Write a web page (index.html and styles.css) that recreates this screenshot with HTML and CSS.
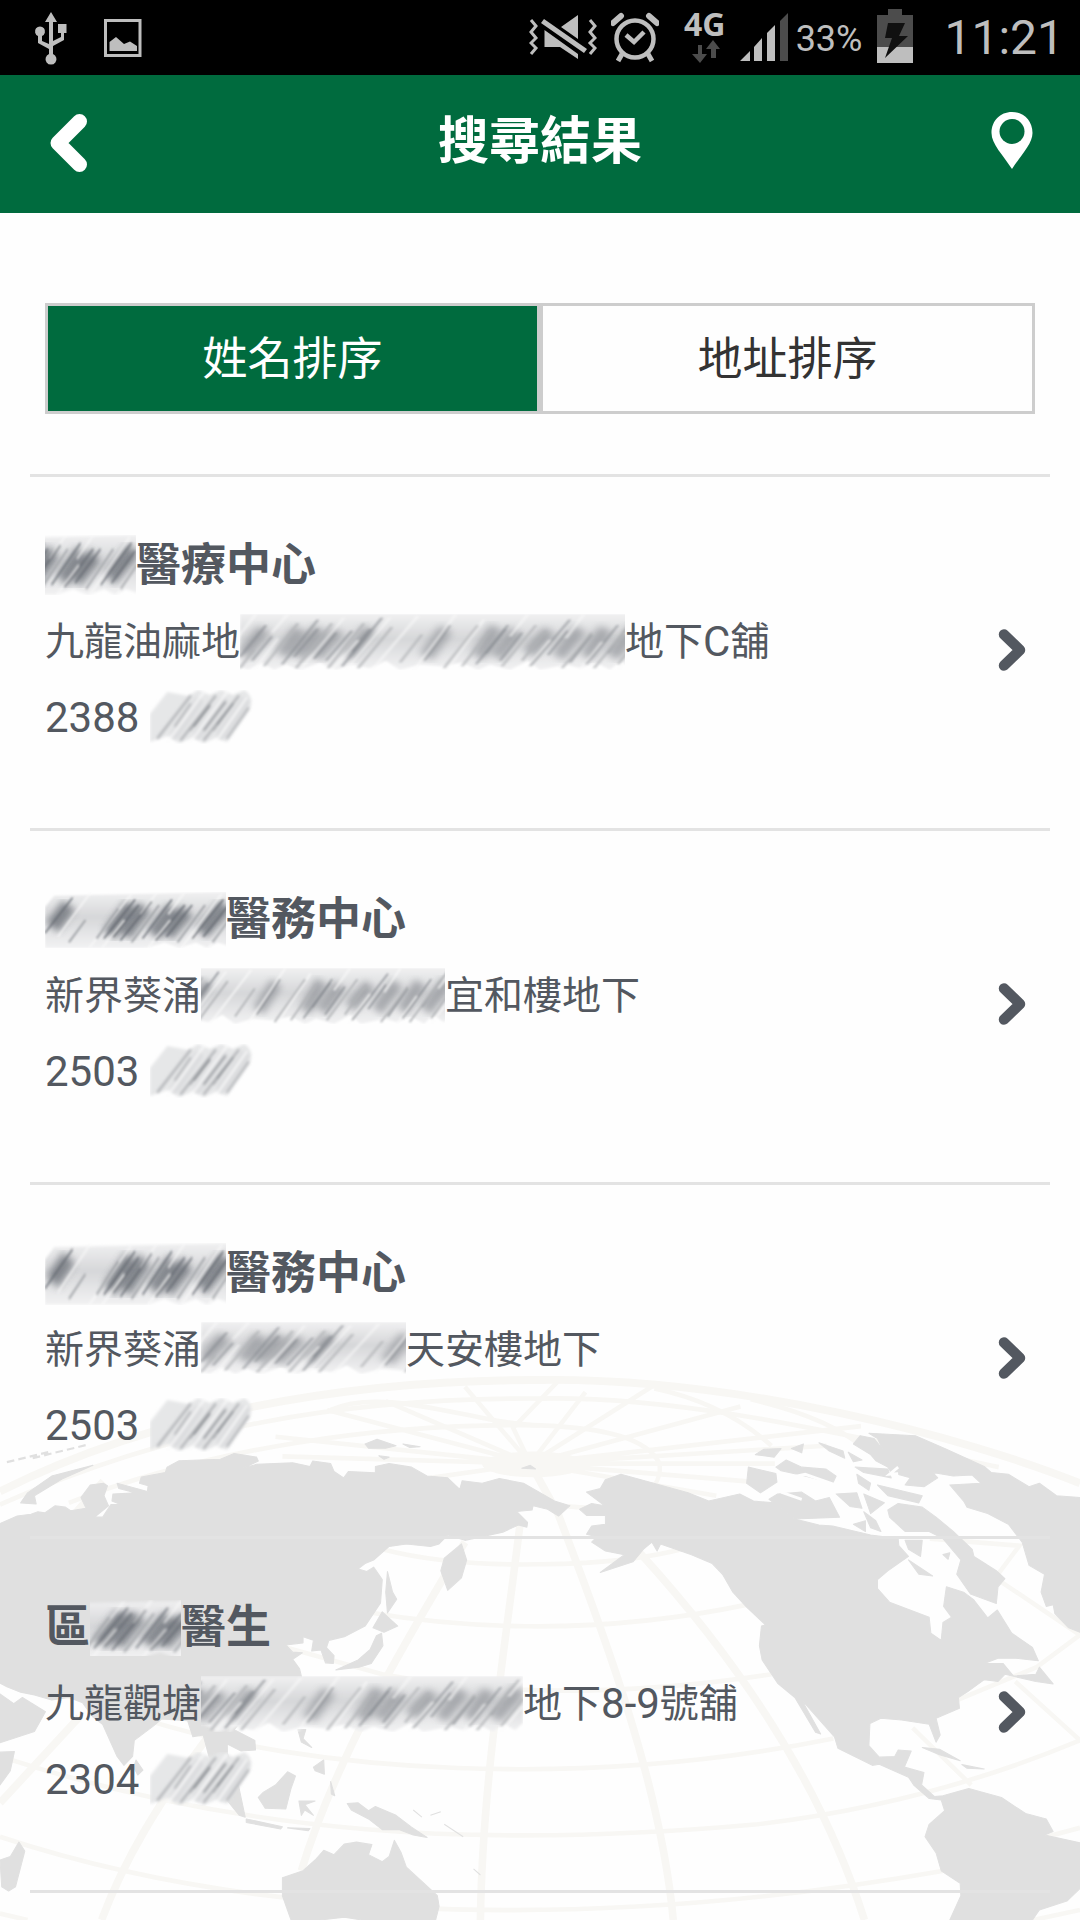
FILE: index.html
```html
<!DOCTYPE html>
<html lang="zh-Hant">
<head>
<meta charset="utf-8">
<meta name="viewport" content="width=device-width, initial-scale=1">
<title>搜尋結果</title>
<link rel="stylesheet" href="styles.css">
</head>
<body>
<svg class="defs" aria-hidden="true">
  <defs>
    <filter id="soft" x="-10%" y="-10%" width="120%" height="120%"><feGaussianBlur stdDeviation="1.4"/></filter>
    <filter id="softer" x="-10%" y="-20%" width="120%" height="140%"><feGaussianBlur stdDeviation="4"/></filter>
    <linearGradient id="fade" x1="0" y1="0" x2="0" y2="1">
      <stop offset="0" stop-color="#f0f0f1"/><stop offset=".45" stop-color="#d6d7d9"/><stop offset="1" stop-color="#f2f2f3"/>
    </linearGradient>
    <!-- brush strokes that hide private details -->
    <symbol id="brush" viewBox="0 0 400 60" preserveAspectRatio="none">
      <path fill="url(#fade)" filter="url(#soft)" d="M0 0H400V50L392 58L380 50L370 60L356 52L340 58L326 54L300 60L288 50L270 60L250 54L238 60L222 52L200 56L180 54L160 60L146 50L130 58L112 54L96 60L80 52L60 60L46 54L34 60L22 52L8 60L0 56Z"/>
      <g filter="url(#softer)" stroke="#7b7f85" stroke-width="14" opacity=".55">
        <path d="M4 44L24 16M42 44L60 16M58 46L80 16M76 46L98 18M108 46L130 16M186 46L206 16M238 46L256 14M256 46L276 18M288 42L310 18M318 46L340 16M346 46L366 16M372 46L396 14"/>
      </g>
      <g filter="url(#soft)" fill="none">
        <path stroke="#fbfbfb" stroke-width="2" opacity=".8" d="M-6 30L16 0M14 60L38 26M32 20L48 0M60 60L104 4M92 60L118 28M106 60L150 4M132 60L178 2M174 60L216 0M206 60L244 6M270 24L288 0M286 60L310 28M326 26L344 0M340 60L362 30M386 22L400 4M378 60L400 32"/>
        <path stroke="#85898f" stroke-width="1.500" d="M0 46L26 12M12 50L32 24M42 54L78 6M54 46L78 16M74 48L96 20M86 50L112 18M102 56L142 4M112 40L130 16M184 50L210 12M236 54L268 12M246 42L266 16M260 50L282 20M290 56L330 6M308 44L328 18M330 52L352 22M346 54L378 12M368 42L388 14"/>
        <path stroke="#b1b3b6" stroke-width="2" d="M0 58L14 38M24 56L58 10M56 58L92 10M88 58L124 10M118 58L152 14M160 52L182 22M204 58L238 12M222 56L250 18M262 56L296 12M282 50L306 18M322 58L352 20M354 58L396 4M378 54L400 24"/>
      </g>
    </symbol>
    <symbol id="brush-dark" viewBox="0 0 200 60" preserveAspectRatio="none">
      <path fill="url(#fade)" filter="url(#soft)" d="M10 4L200 0V58L188 54L176 60L164 54L146 60L130 54L110 60H0V16Z"/>
      <g filter="url(#softer)" stroke="#4d525c" stroke-width="17" opacity=".6">
        <path d="M8 38L26 14M70 46L94 14M86 46L108 16M118 46L140 18M132 46L154 20M170 44L196 14"/>
      </g>
      <g filter="url(#soft)" fill="none">
        <path stroke="#fafafa" stroke-width="2" opacity=".8" d="M14 48L50 0M48 60L94 2M62 60L86 30M104 24L122 0M112 60L136 30M134 24L152 0M148 60L192 2M178 60L200 30"/>
        <path stroke="#62676f" stroke-width="1.500" d="M0 44L30 6M64 50L98 8M74 48L102 14M82 52L116 10M106 50L138 8M120 52L152 14M132 48L160 14M160 50L194 8M172 48L198 16"/>
        <path stroke="#9fa2a6" stroke-width="2" d="M26 54L44 30M56 50L80 18M94 54L124 14M144 54L174 14M182 54L200 30"/>
      </g>
    </symbol>
    <symbol id="brush-light" viewBox="0 0 110 54" preserveAspectRatio="none">
      <path filter="url(#soft)" fill="#e6e7e8" d="M0 24L18 2L40 6L50 0L62 5L74 0L86 5L98 0Q110 8 102 22L80 52L68 48L56 53L44 48L30 53L18 46L0 52Z"/>
      <g filter="url(#soft)" fill="none" stroke-linecap="round">
        <path stroke="#dcdddf" stroke-width="10" d="M26 44L50 12M50 44L76 12M74 44L98 12"/>
        <path stroke="#a9abaf" stroke-width="2" d="M8 48L42 6M26 36L42 14M32 50L68 6M42 40L62 14M56 50L92 6M66 40L84 16M80 48L102 18"/>
        <path stroke="#85898e" stroke-width="2" d="M46 36L62 16M56 40L78 12M70 34L86 14"/>
        <path stroke="#fcfcfc" stroke-width="2" d="M18 52L56 2M42 52L80 2M68 52L100 8"/>
      </g>
    </symbol>
    <symbol id="chevron" viewBox="0 0 40 46">
      <path d="M12 5.500L28 21L12 36.500" fill="none" stroke="#535860" stroke-width="10.500" stroke-linecap="round" stroke-linejoin="round"/>
    </symbol>
  </defs>
</svg>

<div class="status">
  <div class="status-group">
    <svg class="i-usb" viewBox="0 0 38 75" aria-hidden="true">
      <path d="M19 12L25 22H21V41L29 37V33H26V24H34.500V33H32V40L21 46V54A5.500 5.500 0 1 1 17 54V49L6 43V36A5 5 0 1 1 10 36V41L17 44V22H13Z" fill="#bebebe"/>
    </svg>
    <svg class="i-picture" viewBox="0 0 38 75" aria-hidden="true">
      <path d="M1.500 20.500H36V55.500H1.500Z" fill="none" stroke="#bebebe" stroke-width="3"/>
      <path d="M5.500 51V42L12 37L20 44L26 41.500L33 46V51Z" fill="#bebebe"/>
    </svg>
  </div>
  <div class="status-group">
    <svg class="i-mute" viewBox="0 0 68 75" aria-hidden="true">
      <path d="M2 20L7 26L2 32L7 38L2 43L7 48L2 54M61 20L66 26L61 32L66 38L61 43L66 48L61 54" fill="none" stroke="#bebebe" stroke-width="3"/>
      <path d="M15.500 30L49 54V59L31 47H15.500ZM32 27L49 15V39ZM15 19L58 49L55 53L12 23Z" fill="#bebebe"/>
    </svg>
    <svg class="i-alarm" viewBox="0 0 48 75" aria-hidden="true">
      <circle cx="24" cy="39" r="18.500" fill="none" stroke="#bebebe" stroke-width="4.500"/>
      <path d="M15 35L23 42L33 32" fill="none" stroke="#bebebe" stroke-width="4.500"/>
      <path d="M2 23L10 16M46 23L38 16" stroke="#bebebe" stroke-width="6" stroke-linecap="round"/>
      <path d="M11 54L7 61M37 54L41 61" stroke="#bebebe" stroke-width="5"/>
    </svg>
    <div class="network">
      <span>4G</span>
      <svg width="30" height="24" viewBox="0 0 30 24" aria-hidden="true"><path d="M6 5H10V14H15L8 23L0 14H6ZM21 0L28 9H24V18H19V9H14Z" fill="#4c4c4c"/></svg>
    </div>
    <svg class="i-signal" viewBox="0 0 48 75" aria-hidden="true">
      <path d="M0 61L10 51V61ZM14 47L22 38V61H14ZM27 33L35 25V61H27Z" fill="#bebebe"/>
      <path d="M40 21L48 13V61H40Z" fill="#4c4c4c"/>
    </svg>
    <span class="percent">33%</span>
    <svg class="i-battery" viewBox="0 0 36 75" aria-hidden="true">
      <path d="M11 9H25V15H36V47H0V15H11Z" fill="#4c4c4c"/>
      <path d="M0 47H36V63H0Z" fill="#bebebe"/>
      <path d="M11 23H28L22 36H31L8 58L15 38H8Z" fill="#101010"/>
    </svg>
    <time class="clock">11:21</time>
  </div>
</div>

<header class="bar">
  <button class="bar-button" type="button" aria-label="返回">
    <svg width="44" height="64" viewBox="0 0 44 64"><path d="M33.500 9.500L12 31L33.500 52.500" fill="none" stroke="#fff" stroke-width="15" stroke-linecap="round" stroke-linejoin="round"/></svg>
  </button>
  <h1>搜尋結果</h1>
  <button class="bar-button" type="button" aria-label="地圖">
    <svg width="44" height="64" viewBox="0 0 44 64">
      <path fill="#fff" d="M22 0C34 0 42.500 9 42.500 21C42.500 32 31 43 22 57C13 43 1.500 32 1.500 21C1.500 9 10 0 22 0Z"/>
      <ellipse cx="22" cy="19.500" rx="12.500" ry="12.500" fill="#006b3e"/>
    </svg>
  </button>
</header>

<main class="content">
  <svg class="globe" viewBox="0 0 3136 1568" preserveAspectRatio="none" aria-hidden="true">
    <g fill="none" stroke="#f8f7f4" stroke-width="13">
      <path stroke-width="22" d="M0 368C450 150 1000 55 1570 56C2150 50 2800 215 3136 345"/>
      <path d="M0 405C500 190 1000 105 1568 108C2000 100 2500 220 2900 300"/>
      <path d="M200 400C600 250 1100 175 1568 183C1760 190 1880 220 1915 290C1925 360 1850 430 1650 410"/>
      <path d="M800 215L1540 290L1350 75M820 270L1540 290L1120 115M950 140L1540 290L1490 190L1620 60M1700 90L1540 290L1900 70M1540 290L2150 130M1540 290L2500 185M1540 290L2400 240M1540 290L2250 290M1540 290L2170 340M1540 290L2080 380M1540 290L1250 330"/>
      <path d="M1900 80Q2100 120 2240 240M2180 110Q2400 160 2500 240M960 140C1120 70 1380 180 1568 183"/>
      <path d="M1110 530C1250 565 1400 575 1568 572C1760 570 1880 555 2000 525"/>
      <path d="M1060 705C1300 745 1700 780 2170 685"/>
      <path d="M250 650L1110 880C1500 950 1900 930 2240 880M400 1000C900 1160 1700 1200 2420 1060"/>
      <path d="M0 1110C700 1330 1400 1370 2200 1300C2550 1260 2850 1180 3136 1065L2948 900"/>
      <path d="M0 1335C800 1590 1800 1590 2740 1430M0 1550L80 1568M2700 500L2960 520L2890 610L3136 770L3010 860L2760 960M2650 1030L2820 1190M3020 1340L3136 1310M3000 1568L3136 1540"/>
      <g stroke-width="22">
        <path d="M1510 460C1460 850 1400 1200 1395 1568M1350 510C1150 830 970 1130 875 1430M600 1060C460 1240 360 1400 295 1568M230 1000L0 1240M300 340L100 560"/>
        <path d="M1620 430C1760 780 1920 1200 1955 1568M1858 540C2160 860 2390 1200 2510 1568M1540 290L1620 430"/>
      </g>
    </g>
    <ellipse cx="1550" cy="292" rx="150" ry="36" fill="#f8f7f4"/>
    <g fill="#e0e0e0" stroke="#e0e0e0" stroke-width="3" stroke-linejoin="round">
      <path d="M0 458L50 437L90 432L110 425L130 428L160 408L190 412L205 422L250 415L235 385L262 350L300 345L312 352L302 380L315 408L275 440L298 440L322 405L352 405L325 395L328 375L395 372L345 360L340 345L428 368L430 352L405 345L410 328L480 315L485 300L520 282L640 278L680 262L745 272L750 283L705 303L745 292L850 288L900 298L908 283L960 290L970 312L998 330L1012 312L1090 316L1090 298L1130 290L1195 300L1240 325L1300 330L1335 362L1342 338L1400 345L1450 332L1520 345L1610 395L1655 408L1622 437L1590 418L1548 408L1545 420L1500 424L1532 455L1530 468L1505 462L1460 482L1350 505L1300 490L1275 515L1250 522L1180 515L1130 522L1085 560L1060 570L1040 585L1065 592L1085 580L1110 615L1105 680L1060 745L1000 775L955 785L948 805L970 828L968 850L945 848L932 812L905 815L910 785L880 775L880 792L830 798L850 818L878 820L850 838L870 865L880 905L860 950L800 1000L700 1012L680 1035L740 1065L742 1092L700 1095L660 1075L660 1100L690 1180L712 1280L695 1275L640 1210L615 1140L590 1050L560 1055L545 1010L470 1005L445 1025L390 1065L385 1110L360 1135L340 1110L298 1020L270 1000L240 960L200 945L150 952L100 938L60 930L20 915L0 905Z"/>
      <path d="M0 935L40 962L65 945L132 985L100 1040L0 1072ZM0 1098L42 1096L30 1150L0 1190ZM55 1350L72 1375L45 1475L25 1487L5 1475L0 1400L30 1390ZM395 1120L415 1148L400 1162L388 1140Z"/>
      <path d="M820 1450L880 1430L915 1400L940 1373L970 1385L1000 1355L1035 1350L1080 1357L1070 1385L1110 1405L1130 1390L1145 1345L1165 1380L1180 1420L1225 1460L1270 1500L1275 1530L1265 1568H1050L1000 1560L930 1568H845L820 1500Z"/>
      <path d="M765 1210L800 1190L835 1153L858 1165L845 1200L830 1257L770 1255L750 1225ZM1008 1242L1040 1240L1070 1262L1090 1250L1150 1275L1195 1308L1240 1337L1200 1330L1160 1315L1110 1315L1070 1285L1020 1260ZM715 1285L820 1307L815 1313L715 1295ZM865 1035L888 1035L880 1060L905 1085L875 1070ZM910 1140L940 1120L942 1160L915 1150ZM868 1235L915 1235L885 1245L910 1275L885 1260L875 1275ZM835 1310L900 1312L895 1318ZM960 1180L972 1220L962 1215ZM1200 1260L1225 1280M1250 1275L1280 1265M1290 1300L1345 1335M1375 1425L1395 1442"/>
      <path d="M1110 705L1155 745L1115 762L1083 750ZM1108 765L1112 800L1078 850L1042 860L975 868L1040 840L1075 810L1093 772ZM1125 592L1140 650L1152 670L1125 708L1120 650ZM1340 515L1355 560L1340 610L1300 645L1280 590L1290 555ZM270 295L180 333L100 380L105 403L60 400L80 372L150 325ZM1060 235L1095 222L1150 240L1120 247L1070 247ZM1515 303L1540 295L1555 305ZM1100 268L1130 272L1115 278ZM1170 235L1220 243L1190 245Z"/>
      <path fill="none" stroke-width="6" stroke-dasharray="22 12" d="M20 286L140 258M95 275L250 238"/>
      <g transform="translate(1568 0)">
        <path d="M235 320L330 345L430 372L490 395L580 375L620 395L680 400L740 445L810 462L850 465L960 490L1040 500L1042 520L1070 550L1010 590L980 615L980 640L1015 678L1130 720L1135 765L1165 785L1170 735L1195 720L1172 690L1180 635L1230 650L1260 672L1300 722L1328 700L1370 765L1430 805L1447 842L1380 835L1330 835L1290 850L1345 850L1375 885L1440 880L1450 860L1490 907L1440 900L1350 880L1330 900L1290 895L1240 930L1215 945L1218 975L1150 1003L1162 1050L1150 1070L1130 1020L1050 1008L990 1003L958 1018L955 1080L985 1112L1030 1110L1040 1092L1078 1095L1058 1140L1115 1155L1108 1190L1145 1222L1170 1220L1245 1200L1340 1225L1410 1270L1470 1285L1490 1320L1465 1330L1568 1352V1480L1530 1515L1450 1540L1430 1568H1190L1222 1500L1220 1465L1165 1430L1150 1380L1118 1335L1130 1300L1175 1262L1165 1232L1130 1228L1085 1190L1070 1168L985 1132L965 1135L865 1087L855 1055L760 952L815 1047L800 1042L740 945L690 905L645 840L637 800L643 745L655 742L600 692L560 650L530 600L500 570L440 545L350 515L340 535L325 510L300 530L270 565L175 595L245 545L190 535L150 510L165 495L135 488L150 465L190 460L190 435L135 435L115 418L150 402L188 408L135 370L175 360L190 335Z"/>
        <path d="M955 205L1090 212L1180 250L1290 298L1310 315L1360 320L1420 355L1450 345L1500 380L1568 385V762L1535 750L1495 710L1490 685L1470 690L1455 650L1465 600L1420 575L1400 510L1360 460L1300 430L1240 412L1230 395L1190 350L1280 345L1255 322L1200 325L1140 315L1155 330L1115 355L1060 350L1075 330L1020 315L1010 300L975 282L960 265L910 235L930 212L970 220L995 250L980 220Z"/>
        <path d="M1010 420L1040 402L1110 412L1150 440L1200 480L1255 530L1260 550L1325 590L1350 612L1330 635L1325 682L1250 655L1210 600L1222 560L1170 500L1130 480L1060 480L1015 440Z"/>
        <path d="M690 375L760 370L800 395L840 385L870 440L740 445L665 390ZM605 300L685 318L688 342L640 372L600 345ZM625 265L650 250L700 248L680 272ZM685 300L715 280L760 300L830 305L860 325L850 345L770 325L700 310ZM810 232L880 255L885 275L840 255ZM860 375L920 372L935 415L900 410ZM940 375L1000 400L960 430ZM920 320L960 345L955 365L925 345ZM980 350L1110 380L1100 400L1010 380ZM730 248L765 235L760 260ZM940 425L975 450L990 480L960 470ZM910 460L945 450L945 480ZM1060 505L1110 505L1105 550L1070 530ZM1070 560L1140 605L1100 600ZM895 258L935 280L910 285ZM915 300L1010 305L1020 330L940 315ZM1170 545L1190 540L1185 558ZM1110 1085L1160 1090L1220 1122L1160 1105ZM1225 1133L1290 1145L1240 1143Z"/>
      </g>
    </g>
    <path d="M1040 300L1015 320L1040 318M720 330L770 320L860 350L900 345M700 370L760 390" transform="translate(1568 0)" fill="none" stroke="#fefefe" stroke-width="8"/>
  </svg>

  <nav class="tabs" aria-label="排序">
    <button class="tab tab-active" type="button" aria-pressed="true">姓名排序</button>
    <button class="tab" type="button" aria-pressed="false">地址排序</button>
  </nav>

  <ul class="results">
    <li><a class="result" href="#r1">
      <span class="info">
        <strong class="name"><svg class="mask tall" width="91"><use href="#brush-dark" x="-90" width="182" height="60"/></svg>醫療中心</strong>
        <span class="address">九龍油麻地<svg class="mask" width="385"><use href="#brush" width="400" height="56"/></svg>地下<span class="latin">C</span>舖</span>
        <span class="phone">2388 <svg class="mask" width="106"><use href="#brush-light" width="106" height="54"/></svg></span>
      </span>
      <svg class="chevron" aria-hidden="true"><use href="#chevron"/></svg>
    </a></li>
    <li><a class="result" href="#r2">
      <span class="info">
        <strong class="name"><svg class="mask" width="181"><use href="#brush-dark" width="184" height="56"/></svg>醫務中心</strong>
        <span class="address">新界葵涌<svg class="mask" width="244"><use href="#brush" x="-110" width="360" height="56"/></svg>宜和樓地下</span>
        <span class="phone">2503 <svg class="mask" width="106"><use href="#brush-light" width="106" height="54"/></svg></span>
      </span>
      <svg class="chevron" aria-hidden="true"><use href="#chevron"/></svg>
    </a></li>
    <li><a class="result" href="#r3">
      <span class="info">
        <strong class="name"><svg class="mask tall" width="181"><use href="#brush-dark" width="184" height="62"/></svg>醫務中心</strong>
        <span class="address">新界葵涌<svg class="mask" width="205"><use href="#brush" width="400" height="52"/></svg>天安樓地下</span>
        <span class="phone">2503 <svg class="mask" width="106"><use href="#brush-light" width="106" height="54"/></svg></span>
      </span>
      <svg class="chevron" aria-hidden="true"><use href="#chevron"/></svg>
    </a></li>
    <li><a class="result" href="#r4">
      <span class="info">
        <strong class="name">區<svg class="mask" width="91"><use href="#brush-dark" x="-60" width="200" height="58"/></svg>醫生</strong>
        <span class="address">九龍觀塘<svg class="mask" width="322"><use href="#brush" x="-78" width="400" height="56"/></svg>地下<span class="latin">8-9</span>號舖</span>
        <span class="phone">2304 <svg class="mask" width="106"><use href="#brush-light" width="106" height="54"/></svg></span>
      </span>
      <svg class="chevron" aria-hidden="true"><use href="#chevron"/></svg>
    </a></li>
  </ul>
</main>
</body>
</html>
```
FILE: styles.css
```css
* {
  box-sizing: border-box;
}

body {
  margin: 0;
  min-height: 100vh;
  display: flex;
  flex-direction: column;
  background: #fefefe;
  color: #535860;
  font-family: Roboto, "Noto Sans CJK TC", sans-serif;
}

.defs {
  position: absolute;
  width: 0;
  height: 0;
}

/* device status bar */
.status {
  display: flex;
  justify-content: space-between;
  height: 75px;
  padding: 0 16px 0 32px;
  background: #000;
  color: #bebebe;
}

.status-group {
  display: flex;
}

.status svg {
  display: block;
}

.i-usb,
.i-picture {
  width: 38px;
}

.i-picture {
  margin-left: 34px;
}

.i-mute {
  width: 68px;
}

.i-alarm {
  width: 48px;
  margin-left: 14px;
}

.network {
  display: flex;
  flex-direction: column;
  align-items: center;
  gap: 4px;
  width: 44px;
  margin-left: 24px;
  padding-top: 12px;
  font: bold 32px/24px "Open Sans", sans-serif;
}

.network svg {
  margin-left: 4px;
}

.i-signal {
  width: 48px;
  margin-left: 13px;
}

.percent {
  margin-left: 8px;
  font-size: 36px;
  line-height: 78px;
}

.i-battery {
  width: 36px;
  margin-left: 15px;
}

.clock {
  margin-left: 31px;
  font-size: 48px;
  line-height: 75px;
}

/* title bar */
.bar {
  display: flex;
  align-items: center;
  justify-content: space-between;
  height: 138px;
  padding: 0 46px;
  background: #006b3e;
  color: #fff;
}

.bar h1 {
  margin: 0;
  padding-bottom: 4px;
  font-size: 51px;
  line-height: 72px;
  font-weight: 700;
}

.bar-button {
  display: flex;
  padding: 0;
  border: 0;
  background: none;
}

/* page */
.content {
  position: relative;
  z-index: 0;
  flex: 1;
  padding: 90px 30px 27px;
  overflow: hidden;
}

.globe {
  position: absolute;
  z-index: -1;
  left: 0;
  bottom: 0;
  width: 100%;
  height: 560px;
}

.tabs {
  display: flex;
  margin: 0 15px 60px;
}

.tab {
  flex: 1;
  height: 111px;
  padding: 2px 0 0;
  border: 3px solid #cdcdcd;
  background: #fefefe;
  color: #333;
  font: 45px/60px Roboto, "Noto Sans CJK TC", sans-serif;
}

.tab-active {
  background: #006b3e;
  color: #fff;
}

.results {
  margin: 0;
  padding: 0;
  list-style: none;
  border-bottom: 3px solid #e3e3e3;
}

.result {
  display: flex;
  align-items: center;
  justify-content: space-between;
  padding: 51px 18px 72px 15px;
  border-top: 3px solid #e3e3e3;
  color: inherit;
  text-decoration: none;
}

.info {
  display: flex;
  flex-direction: column;
}

.name,
.address,
.phone {
  display: flex;
  align-items: center;
  height: 76px;
  line-height: 76px;
  white-space: pre;
}

.name {
  font-size: 45px;
  font-weight: 700;
}

.address {
  font-size: 39px;
}

.phone,
.latin {
  font-size: 42px;
}

.mask {
  flex: none;
  height: 56px;
}

.mask.tall {
  height: 62px;
}

.chevron {
  flex: none;
  width: 40px;
  height: 46px;
  margin-top: 20px;
}
```
